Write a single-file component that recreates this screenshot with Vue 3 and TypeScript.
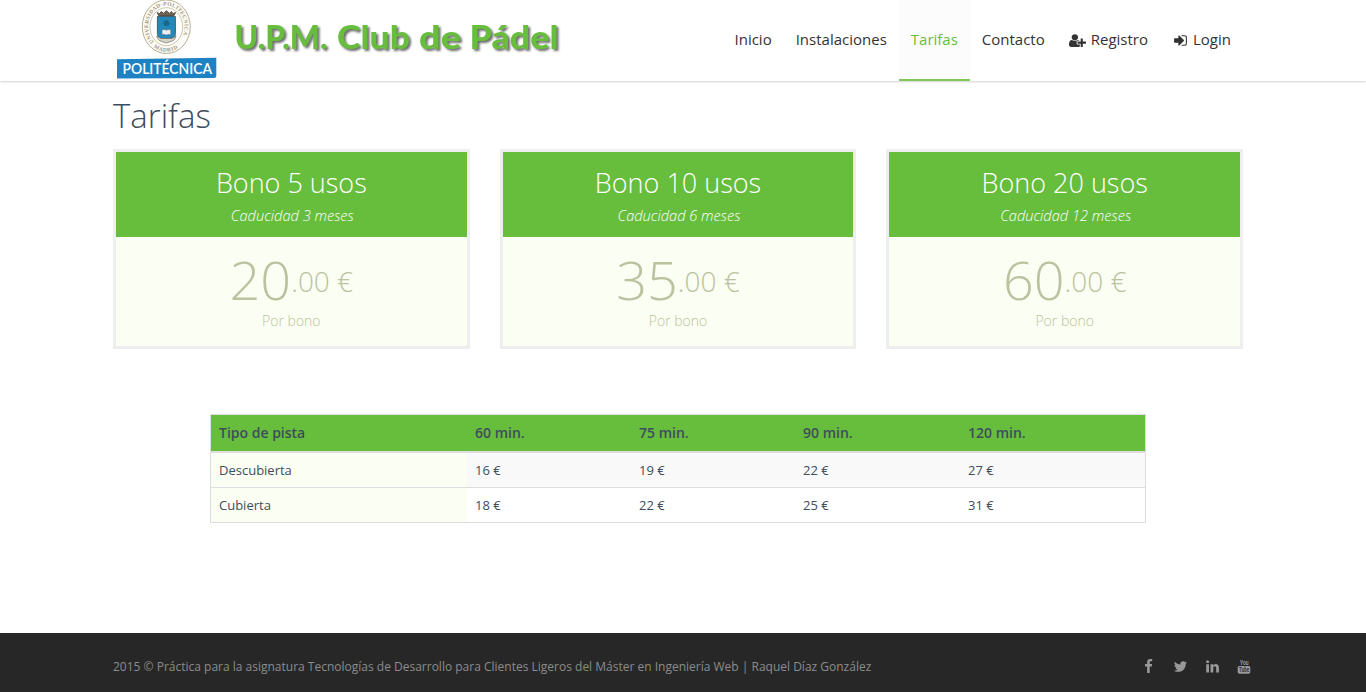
<script setup lang="ts">
interface NavItem {
  label: string
  active?: boolean
  icon?: 'register' | 'login'
}

interface Pass {
  title: string
  validity: string
  price: string
}

interface Rate {
  court: string
  prices: number[]
}

interface Social {
  name: string
  path?: string
}

const navItems: NavItem[] = [
  { label: 'Inicio' },
  { label: 'Instalaciones' },
  { label: 'Tarifas', active: true },
  { label: 'Contacto' },
  { label: 'Registro', icon: 'register' },
  { label: 'Login', icon: 'login' },
]

const passes: Pass[] = [
  { title: 'Bono 5 usos', validity: 'Caducidad 3 meses', price: '20' },
  { title: 'Bono 10 usos', validity: 'Caducidad 6 meses', price: '35' },
  { title: 'Bono 20 usos', validity: 'Caducidad 12 meses', price: '60' },
]

const headings: string[] = ['Tipo de pista', '60 min.', '75 min.', '90 min.', '120 min.']

const rates: Rate[] = [
  { court: 'Descubierta', prices: [16, 19, 22, 27] },
  { court: 'Cubierta', prices: [18, 22, 25, 31] },
]

const socials: Social[] = [
  {
    name: 'facebook',
    path: 'M1343 12v264h-157q-86 0-116 36t-30 108v189h293l-39 296h-254v759h-306v-759h-255v-296h255v-218q0-186 104-288.5t277-102.5q147 0 228 12z',
  },
  {
    name: 'twitter',
    path: 'M1684 408q-67 98-162 167 1 14 1 42 0 130-38 259.5t-115.5 248.5-184.5 210.5-258 146-323 54.5q-271 0-496-145 35 4 78 4 225 0 401-138-105-2-188-64.5t-114-159.5q33 5 61 5 43 0 85-11-112-23-185.5-111.5t-73.5-205.5v-4q68 38 146 41-66-44-105-115t-39-154q0-88 44-163 121 149 294.5 238.5t371.5 99.5q-8-38-8-74 0-134 94.5-228.5t228.5-94.5q140 0 236 102 109-21 205-78-37 115-142 178 93-10 186-50z',
  },
  {
    name: 'linkedin',
    path: 'M477 625v991h-330v-991h330zm21-306q1 73-50.5 122t-135.5 49h-2q-82 0-132-49t-50-122q0-74 51.5-122.5t134.5-48.5 133 48.5 51 122.5zm1166 729v568h-329v-530q0-105-40.5-164.5t-126.5-59.5q-63 0-105.5 34.5t-63.5 85.5q-11 30-11 81v553h-329q2-399 2-647t-1-296l-1-48h329v144h-2q20-32 41-56t56.5-52 87-43.5 114.5-15.5q171 0 275 113.5t104 332.5z',
  },
  { name: 'youtube' },
]
</script>

<template>
  <div class="page">
    <header class="header">
      <div class="brand">
        <svg class="crest" width="104" height="81" viewBox="113 0 104 81">
          <ellipse cx="166.3" cy="26.7" rx="24" ry="26.8" fill="#fdfcf8" stroke="#b9ad8c" stroke-width="1" />
          <ellipse cx="166.3" cy="26.7" rx="16.4" ry="19" fill="#fff" stroke="#c9bf9f" stroke-width="0.9" />
          <path id="ring" d="M154 41.800 A18.200 20.800 0 1 1 178.600 41.800" fill="none" />
          <path id="ring-low" d="M153.500 47.200 A22.400 25 0 0 0 179.100 47.200" fill="none" />
          <text class="seal-text"><textPath href="#ring" textLength="86">UNIVERSIDAD·POLITECNICA</textPath></text>
          <text class="seal-text"><textPath href="#ring-low" textLength="26">MADRID</textPath></text>
          <path d="M157.3 12.5l1.2 3h15.6l1.4-3-2.5 1.2-1.6-2.3-2 2-3-2.6-3 2.6-2-2-1.8 2.3z" fill="#6e6354" stroke="#5b5145" stroke-width="1" />
          <path d="M157.4 16.5h18v17q0 4.500-4.500 5h-9q-4.500-.5-4.500-5z" fill="#2389bd" stroke="#45616c" stroke-width="1" />
          <circle cx="166.400" cy="23.300" r="2.700" fill="#166184" />
          <path d="M166.400 19v8.600M162.100 23.300h8.600M163.400 20.300l6 6M169.400 20.300l-6 6" stroke="#256e88" stroke-width=".6" />
          <path d="M162 29.800q2.400-.8 4.400.3 2-1.100 4.400-.3v5q-2.400-.6-4.400.3-2-.9-4.400-.3z" fill="#e7eff0" stroke="#566d75" stroke-width=".6" />
          <path d="M156.800 36q1 4.800 5 5.400l4.600 1.600 4.600-1.600q4-.6 5-5.400l-4 2.500h-11.200z" fill="#d9d5c8" stroke="#756e60" stroke-width=".7" />
          <path d="M117 59.200L216.300 57.800V76.200Q216.200 78 214 78L117 78.500z" fill="#1d82c4" />
          <text class="crest-label" x="122.500" y="74.200" textLength="89.500" lengthAdjust="spacingAndGlyphs">POLITÉCNICA</text>
        </svg>
        <svg class="club" width="335" height="42" viewBox="230 17 335 42">
          <text y="48.500">
            <tspan x="234.500" textLength="93" lengthAdjust="spacingAndGlyphs">U.P.M.</tspan>
            <tspan x="337" textLength="73" lengthAdjust="spacingAndGlyphs">Club</tspan>
            <tspan x="419" textLength="42" lengthAdjust="spacingAndGlyphs">de</tspan>
            <tspan x="469.500" textLength="89" lengthAdjust="spacingAndGlyphs">Pádel</tspan>
          </text>
        </svg>
      </div>
      <nav class="nav">
        <a v-for="item in navItems" :key="item.label" :class="['nav-item', item.icon, { active: item.active }]">
          <svg v-if="item.icon === 'register'" class="register-icon" viewBox="0 0 2048 1792">
            <path d="M704 896q-159 0-271.5-112.5t-112.5-271.5 112.5-271.5 271.5-112.5 271.5 112.5 112.5 271.5-112.5 271.5-271.5 112.5zm960 128h352q13 0 22.5 9.5t9.5 22.5v192q0 13-9.5 22.5t-22.5 9.500h-352v352q0 13-9.5 22.5t-22.5 9.5h-192q-13 0-22.5-9.5t-9.5-22.5v-352h-352q-13 0-22.5-9.5t-9.5-22.5v-192q0-13 9.5-22.5t22.5-9.5h352v-352q0-13 9.5-22.5t22.5-9.5h192q13 0 22.5 9.5t9.5 22.5v352zm-736 224q0 52 38 90t90 38h256v238q-68 50-171 50h-874q-121 0-194-69t-73-190q0-53 3.5-103.5t14-109 26.5-108.5 43-97.5 62-81 85.5-53.5 111.5-20q19 0 39 17 79 61 154.5 91.5t164.5 30.5 164.5-30.5 154.5-91.5q20-17 39-17 132 0 217 96h-223q-52 0-90 38t-38 90v192z" />
          </svg>
          <svg v-else-if="item.icon === 'login'" class="login-icon" viewBox="128 0 1536 1792">
            <path d="M1312 896q0 26-19 45l-544 544q-19 19-45 19t-45-19-19-45v-288h-448q-26 0-45-19t-19-45v-384q0-26 19-45t45-19h448v-288q0-26 19-45t45-19 45 19l544 544q19 19 19 45zm352-352v704q0 119-84.5 203.5t-203.5 84.5h-320q-13 0-22.5-9.5t-9.5-22.5q0-4-1-20t-.5-26.5 3-23.500 10-19.5 20.5-6.5h320q66 0 113-47t47-113v-704q0-66-47-113t-113-47h-312l-11.5-1-11.5-3-8-5.5-7-9-2-13.5q0-4-1-20t-.5-26.5 3-23.5 10-19.5 20.5-6.5h320q119 0 203.5 84.5t84.5 203.5z" />
          </svg>
          <span>{{ item.label }}</span>
        </a>
      </nav>
    </header>

    <main class="content">
      <h1>Tarifas</h1>
      <section class="passes">
        <article v-for="pass in passes" :key="pass.title" class="pass">
          <div class="pass-head">
            <h2>{{ pass.title }}</h2>
            <em>{{ pass.validity }}</em>
          </div>
          <div class="pass-body">
            <div class="price"><span class="amount">{{ pass.price }}</span><span class="cents">.00 €</span></div>
            <div class="unit">Por bono</div>
          </div>
        </article>
      </section>

      <table class="rates">
        <colgroup>
          <col class="col-court" />
          <col class="col-rate" />
          <col class="col-rate" />
          <col class="col-rate-wide" />
          <col />
        </colgroup>
        <thead>
          <tr>
            <th v-for="heading in headings" :key="heading">{{ heading }}</th>
          </tr>
        </thead>
        <tbody>
          <tr v-for="rate in rates" :key="rate.court">
            <td class="court">{{ rate.court }}</td>
            <td v-for="price in rate.prices" :key="price">{{ price }} €</td>
          </tr>
        </tbody>
      </table>
    </main>

    <footer class="footer">
      <p>2015 © Práctica para la asignatura Tecnologías de Desarrollo para Clientes Ligeros del Máster en Ingeniería Web | Raquel Díaz González</p>
      <div class="socials">
        <a v-for="social in socials" :key="social.name">
          <svg v-if="social.path" viewBox="0 0 1792 1792"><path :d="social.path" /></svg>
          <svg v-else class="youtube" viewBox="0 0 14 16">
            <text x="3" y="6.300" textLength="8.400" lengthAdjust="spacingAndGlyphs">You</text>
            <rect x=".7" y="7" width="12.600" height="7.700" rx="1.600" />
            <text class="tube" x="2" y="13.300" textLength="10.200" lengthAdjust="spacingAndGlyphs">Tube</text>
          </svg>
        </a>
      </div>
    </footer>
  </div>
</template>

<style>
html,
body {
  margin: 0;
  overflow: hidden;
}
</style>

<style scoped>
.page {
  height: 692px;
  display: flex;
  flex-direction: column;
  background: #fff;
  color: #3e4d5c;
  font-family: "Open Sans", "Noto Sans", sans-serif;
  font-size: 13px;
}

.header {
  box-sizing: border-box;
  height: 81px;
  flex: none;
  display: flex;
  justify-content: space-between;
  padding: 0 123px 0 113px;
  box-shadow: 0 1px 2px rgba(0, 0, 0, 0.18);
}

.brand {
  display: flex;
}

.crest {
  display: block;
  overflow: visible;
}

.seal-text {
  font: 700 5.500px "Liberation Serif", serif;
  fill: #a39777;
}

.crest-label {
  font: 600 15px Lato, sans-serif;
  fill: #fff;
}

.club {
  display: block;
  margin: 17px 0 0 13px;
  font: 900 32px Lato, sans-serif;
  fill: #67bd3c;
  filter: drop-shadow(2px 2px 1px rgba(60, 60, 60, 0.75));
}

.nav {
  display: flex;
}

.nav-item {
  box-sizing: border-box;
  height: 81px;
  display: flex;
  align-items: center;
  padding: 0 12px 3px;
  color: #333;
  font-size: 15px;
  white-space: nowrap;
}

.nav-item.active {
  color: #67bd3c;
  background: #fcfcfc;
  border-bottom: 2px solid #7cc957;
  padding-bottom: 1px;
}

.nav-item svg {
  fill: #333;
  height: 15px;
  margin-top: 2px;
}

.register-icon {
  width: 17px;
  margin-right: 5px;
}

.login-icon {
  width: 13px;
  margin: 0 6px 0 2px;
}

.content {
  flex: 1;
  padding: 0 123px 0 113px;
}

h1 {
  margin: 11px 0 9px;
  font-size: 33px;
  line-height: 48px;
  font-weight: 300;
}

.passes {
  display: grid;
  grid-template-columns: repeat(3, 1fr);
  gap: 30px;
}

.pass {
  box-sizing: border-box;
  height: 200px;
  border: 3px solid #eee;
  text-align: center;
}

.pass-head {
  box-sizing: border-box;
  height: 85px;
  padding-top: 11px;
  background: #67bd3c;
  color: #fff;
}

h2 {
  margin: 0;
  font-size: 27px;
  line-height: 40px;
  font-weight: 300;
}

.pass-head em {
  display: block;
  padding-left: 2px;
  font-size: 14.600px;
  line-height: 24px;
  font-weight: 300;
}

.pass-body {
  box-sizing: border-box;
  height: 109px;
  padding-top: 16px;
  background: #fbfef2;
  color: #bac39f;
  font-weight: 300;
}

.price {
  height: 56px;
  display: flex;
  justify-content: center;
  line-height: 56px;
}

.amount {
  font-size: 54px;
  line-height: 52px;
}

.cents {
  font-size: 28px;
}

.unit {
  font-size: 14px;
  line-height: 24px;
}

.rates {
  width: 936px;
  margin: 65px 0 0 97px;
  table-layout: fixed;
  border-collapse: separate;
  border-spacing: 0;
  border: 1px solid #ddd;
}

.col-court {
  width: 256px;
}

.col-rate {
  width: 164px;
}

.col-rate-wide {
  width: 165px;
}

th,
td {
  box-sizing: border-box;
  padding: 0 8px;
  text-align: left;
  line-height: 18px;
}

th {
  height: 38px;
  background: #67bd3c;
  background-clip: padding-box;
  border-bottom: 2px solid #ddd;
  font-size: 14px;
  font-weight: 600;
}

td {
  height: 34px;
}

tbody tr:first-child td {
  height: 35px;
  border-bottom: 1px solid #ddd;
  background: #f9f9f9;
}

tbody tr td.court,
tbody tr:first-child td.court {
  background: #fbfef2;
}

.footer {
  box-sizing: border-box;
  height: 59px;
  flex: none;
  display: flex;
  align-items: center;
  justify-content: space-between;
  padding: 8px 114px 0 113px;
  background: #272727;
  color: #8c8c8c;
}

.footer p {
  margin: 0;
  font-size: 12.010px;
}

.socials {
  display: flex;
  gap: 16px;
}

.socials a {
  width: 16px;
  height: 16px;
  display: flex;
  align-items: center;
  justify-content: center;
}

.socials svg {
  width: 15px;
  height: 15px;
  fill: #999;
}

.socials .youtube {
  width: 14px;
  height: 16px;
  overflow: visible;
  font: 700 7.500px Roboto, sans-serif;
}

.youtube .tube {
  font-size: 7px;
  fill: #333;
}
</style>
